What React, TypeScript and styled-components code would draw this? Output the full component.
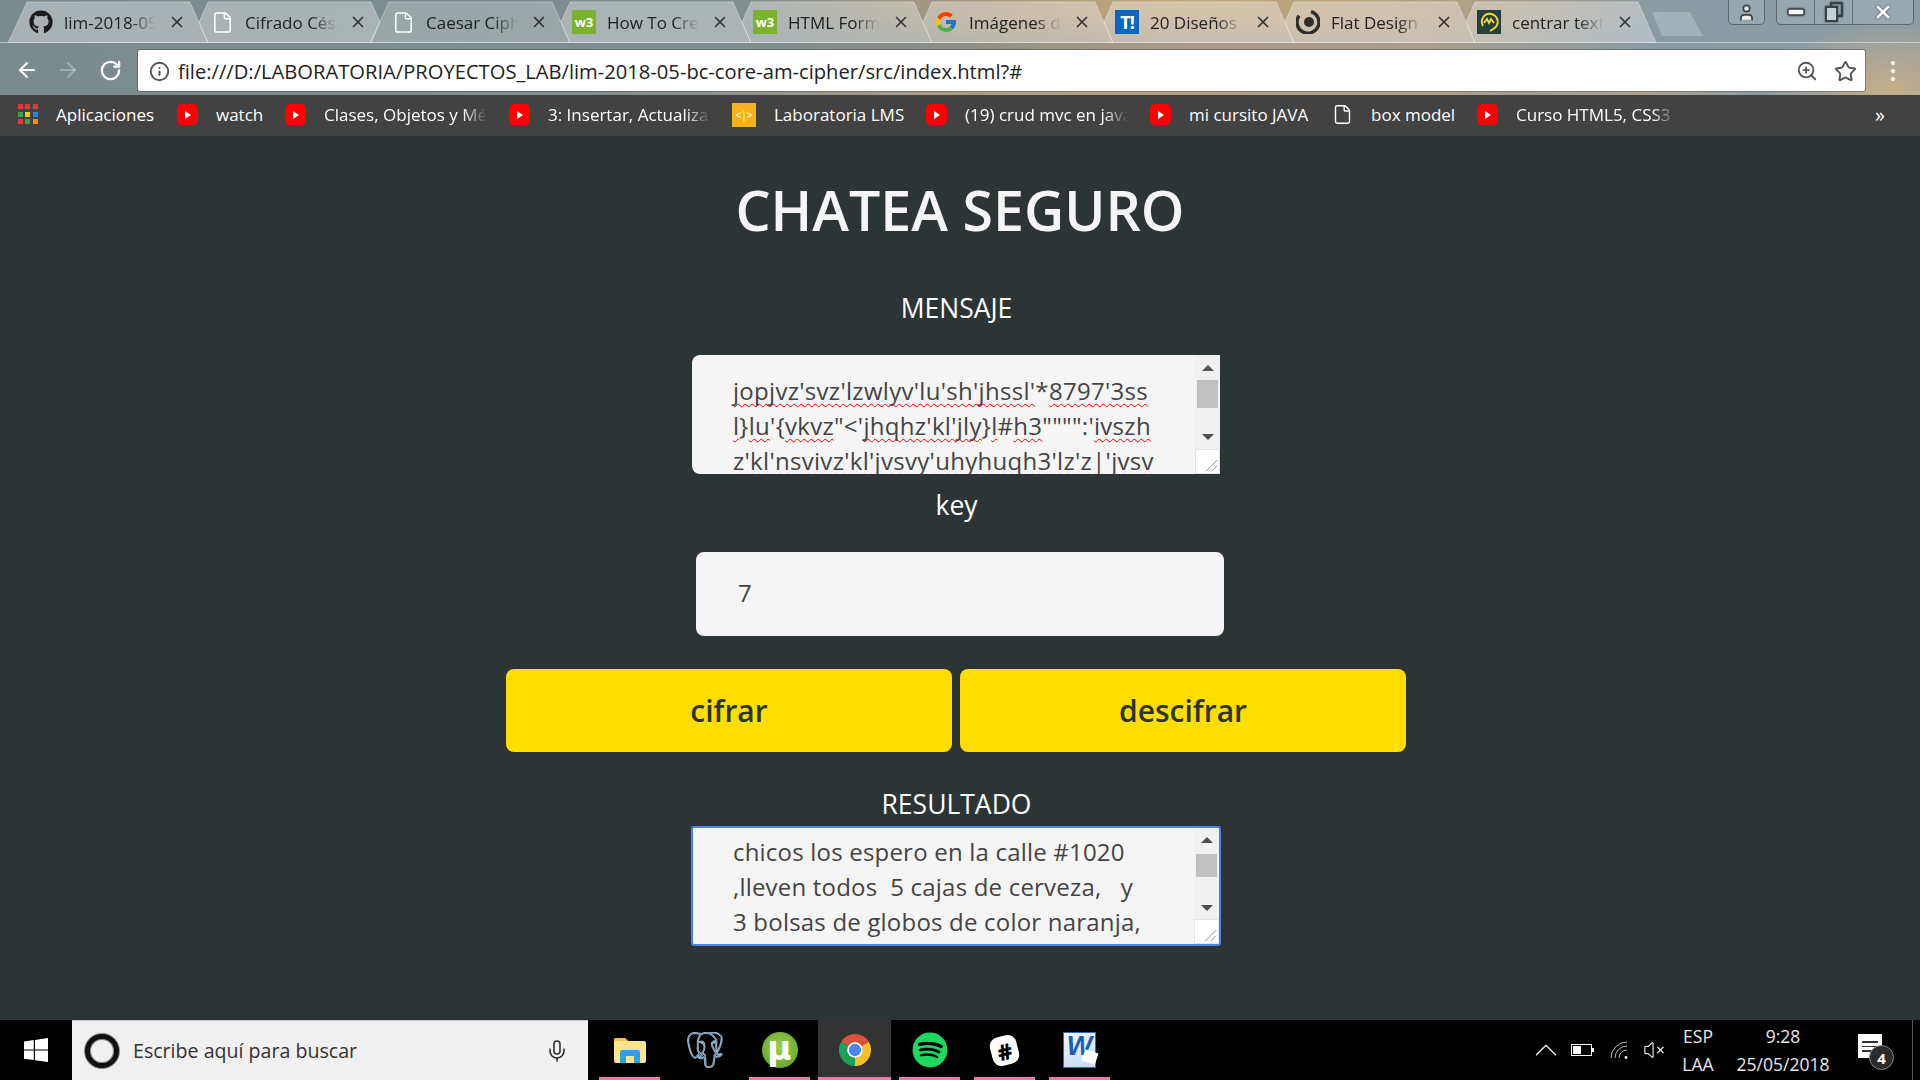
import React from "react";
import styled, { createGlobalStyle } from "styled-components";
import { FaGithub, FaSpotify } from "react-icons/fa";
import { FcGoogle } from "react-icons/fc";
import { SiPostgresql } from "react-icons/si";
import { ArrowLeft, ArrowRight, RotateCw, Info, ZoomIn, Star, File, Mic, ChevronUp, VolumeX, User, X } from "lucide-react";

const Global = createGlobalStyle`
  html, body { margin: 0; padding: 0; background: #2d3436; overflow: hidden; }
  * { box-sizing: border-box; }
  #root { width: 1920px; height: 1080px; }
`;

const Screen = styled.div`
  width: 1920px; height: 1080px; display: flex; flex-direction: column;
  font-family: "Open Sans", "Liberation Sans", sans-serif; overflow: hidden;
`;

/* ---------- browser top ---------- */
const Frame = styled.header`
  height: 95px; flex: none; display: flex; flex-direction: column;
  background:
    radial-gradient(ellipse 130px 70px at 1890px 90px, #c8ae8a 0%, rgba(200,174,138,0) 100%),
    radial-gradient(ellipse 120px 30px at 1640px 85px, #b9a689 0%, rgba(185,166,137,0) 100%),
    radial-gradient(ellipse 480px 50px at 1200px 5px, #c2a67c 0%, rgba(194,166,124,0) 100%),
    radial-gradient(ellipse 560px 45px at 1130px 90px, #b8a388 0%, rgba(184,163,136,0) 100%),
    linear-gradient(90deg, #7b8a8d 0%, #7f8e90 38%, #8e8f85 52%, #a3998a 62%, #a89e8b 74%, #8a9ba3 86%, #8b9ca4 100%);
`;
const TabStrip = styled.div`
  height: 43px; flex: none; display: flex; padding-left: 8px;
  border-bottom: 1px solid rgba(255,255,255,.45);
`;
const TabBox = styled.div`
  position: relative; width: 200px; height: 43px; margin-right: -19px; flex: none;
  display: flex; align-items: center; padding: 1px 0 0 21px; color: #222;
`;
const TabShape = styled.svg`
  position: absolute; left: 0; top: 0; width: 200px; height: 43px; pointer-events: none;
`;
const Fav = styled.span`
  position: relative; width: 24px; height: 24px; flex: none; display: flex; align-items: center; justify-content: center;
`;
const TabTitle = styled.span`
  position: relative; width: 92px; margin-left: 11px; font-size: 17px; white-space: nowrap; overflow: hidden; flex: none;
  -webkit-mask-image: linear-gradient(90deg, #000 72%, transparent 100%);
  mask-image: linear-gradient(90deg, #000 72%, transparent 100%);
`;
const TabClose = styled.span`
  position: relative; margin-left: 11px; width: 20px; height: 20px; display: flex; align-items: center; justify-content: center; color: #333;
`;
const W3Badge = styled.span`
  width: 24px; height: 24px; background: #7bb32e; color: #fff; font-size: 13px; font-weight: 700; display: flex; align-items: center; justify-content: center; border-radius: 1px;
`;
const TBadge = styled.span`
  width: 24px; height: 24px; background: #0b66c3; color: #fff; font-size: 18px; font-weight: 700; display: flex; align-items: center; justify-content: center; letter-spacing: -1px;
`;
const NewTab = styled.svg`
  width: 51px; height: 24px; margin: 12px 0 0 15px; flex: none;
`;
const ProfileBtn = styled.div`
  width: 37px; height: 25px; margin-left: 25px; flex: none; border: 1px solid rgba(60,70,75,.65); border-top: none;
  border-radius: 0 0 5px 5px; background: rgba(255,255,255,.12); display: flex; align-items: center; justify-content: center; color: #3a4246;
`;
const WinGroup = styled.div`
  width: 138px; height: 25px; margin-left: 11px; flex: none; display: flex; border: 1px solid rgba(60,70,75,.65); border-top: none;
  border-radius: 0 0 5px 5px; background: rgba(255,255,255,.12);
`;
const WinBtn = styled.div<{ $w: number }>`
  width: ${(p) => p.$w}px; display: flex; align-items: center; justify-content: center; color: #f4f4f4;
  & + & { border-left: 1px solid rgba(60,70,75,.55); }
  & svg { filter: drop-shadow(0 0 1px #3a4246); }
`;
const Toolbar = styled.div`
  height: 52px; flex: none; display: flex; padding-top: 7px; align-items: flex-start;
`;
const NavBtn = styled.div<{ $ml: number; $dim?: boolean }>`
  width: 24px; height: 24px; margin: 8px 0 0 ${(p) => p.$ml}px; display: flex; align-items: center; justify-content: center;
  color: ${(p) => (p.$dim ? "rgba(255,255,255,.28)" : "#fff")}; flex: none;
`;
const AddressBar = styled.div`
  width: 1727px; height: 41px; margin-left: 16px; flex: none; background: #fff; border-radius: 2px; display: flex; align-items: center;
  box-shadow: 0 0 0 1px rgba(70,70,70,.45); padding: 1px 8px 0 11px; color: #555;
`;
const Url = styled.span`
  margin-left: 8px; font-size: 20.17px; color: #222; white-space: nowrap; flex: 1;
`;
const BarIcon = styled.span<{ $ml?: number }>`
  margin-left: ${(p) => p.$ml ?? 0}px; display: flex; color: #555;
`;
const MenuDots = styled.div`
  margin: 11px 0 0 26px; display: flex; flex-direction: column; gap: 4px;
  & span { width: 4px; height: 4px; border-radius: 50%; background: #fff; }
`;

/* ---------- bookmarks ---------- */
const Bookmarks = styled.nav`
  height: 41px; flex: none; background: #424242; display: flex; align-items: center; padding: 0 0 2px 17px; gap: 22px; color: #fff;
`;
const Mark = styled.div`
  display: flex; align-items: center; gap: 18px; flex: none;
`;
const MarkIcon = styled.span`
  width: 21px; height: 24px; display: flex; align-items: center; justify-content: center; flex: none;
`;
const MarkLabel = styled.span<{ $w: number; $fade?: boolean }>`
  width: ${(p) => p.$w}px; font-size: 17px; white-space: nowrap; overflow: hidden;
  ${(p) => p.$fade ? "-webkit-mask-image: linear-gradient(90deg,#000 85%,transparent 100%); mask-image: linear-gradient(90deg,#000 85%,transparent 100%);" : ""}
`;
const Yt = styled.span`
  width: 21px; height: 21px; background: #f00; border-radius: 5px; display: flex; align-items: center; justify-content: center;
  &::after { content: ""; border-left: 6px solid #fff; border-top: 4px solid transparent; border-bottom: 4px solid transparent; }
`;
const LabBadge = styled.span`
  width: 24px; height: 24px; background: #f6b21b; color: #fff; font-size: 10px; display: flex; align-items: center; justify-content: center; flex: none;
`;
const AppsGrid = styled.span`
  width: 20px; height: 21px; display: grid; grid-template-columns: repeat(3, 5px); grid-auto-rows: 5px; gap: 2.5px;
`;
const AppDot = styled.i<{ $c: string }>` background: ${(p) => p.$c}; display: block; `;
const More = styled.span`
  margin-left: auto; margin-right: 35px; font-size: 20px; color: #fff;
`;

/* ---------- page ---------- */
const Page = styled.main`
  flex: 1; background: #2d3436; display: flex; flex-direction: column; align-items: center; padding-top: 36px; position: relative;
`;
const Title = styled.h1`
  margin: 0; font-size: 55.5px; line-height: 76px; font-weight: 600; color: #f5f5f5; height: 76px; white-space: nowrap;
`;
const Label = styled.label<{ $mt: number }>`
  display: block; width: 100%; text-align: center; padding-right: 7px; font-size: 26.5px; line-height: 30px; height: 30px; color: #fff; margin-top: ${(p) => p.$mt}px;
`;
const TextBox = styled.div<{ $mt: number; $focus?: boolean }>`
  width: ${(p) => (p.$focus ? 530 : 528)}px; height: ${(p) => (p.$focus ? 120 : 119)}px; margin: ${(p) => p.$mt}px 8px 0 0; display: flex; flex: none; overflow: hidden;
  border-radius: ${(p) => (p.$focus ? "3px" : "8px 0 0 8px")};
  border: ${(p) => (p.$focus ? "2px solid #4a86e0" : "none")};
`;
const TextPane = styled.div<{ $pt: number; $pl: number; $ls: number }>`
  flex: 1; background: #f5f5f5; padding: ${(p) => p.$pt}px 0 0 ${(p) => p.$pl}px; font-size: 24px; line-height: 35px; color: #444; letter-spacing: ${(p) => p.$ls}px; overflow: hidden;
`;
const TextLine = styled.div` white-space: pre; `;
const Miss = styled.span`
  text-decoration: underline wavy #f00 1px; text-underline-offset: 3px; text-decoration-skip-ink: none;
`;
const ScrollTrack = styled.div`
  width: 25px; flex: none; background: #f1f1f1; display: flex; flex-direction: column; align-items: center;
`;
const ArrowUp = styled.span<{ $mt: number }>`
  margin-top: ${(p) => p.$mt}px; flex: none; width: 0; height: 0; border-left: 6px solid transparent; border-right: 6px solid transparent; border-bottom: 6px solid #505050;
`;
const ArrowDown = styled.span`
  flex: none; width: 0; height: 0; border-left: 6px solid transparent; border-right: 6px solid transparent; border-top: 6px solid #505050;
`;
const Thumb = styled.span<{ $mt: number; $h: number; $mb: number }>`
  margin: ${(p) => p.$mt}px 0 ${(p) => p.$mb}px; height: ${(p) => p.$h}px; width: 21px; background: #c1c1c1; flex: none;
`;
const Resizer = styled.svg`
  margin-top: auto; width: 25px; height: 25px; flex: none; background: #fff; border: 1px solid #e4e4e4;
`;
const KeyInput = styled.div`
  width: 528px; height: 84px; margin-top: 32px; flex: none; background: #f5f5f5; border-radius: 8px; padding: 0 0 3px 42px; display: flex; align-items: center;
  font-size: 24px; color: #444;
`;
const Buttons = styled.div`
  display: flex; gap: 8px; margin: 33px 8px 0 0; flex: none;
`;
const Action = styled.button`
  width: 446px; height: 83px; border: none; border-radius: 8px; background: #ffde00; color: #2d3436; font-family: inherit; font-size: 30px; font-weight: 600; padding: 0;
`;

/* ---------- taskbar ---------- */
const Taskbar = styled.footer`
  height: 60px; flex: none; background: #000; display: flex; align-items: stretch;
`;
const Start = styled.div`
  width: 72px; flex: none; display: flex; align-items: center; justify-content: center;
`;
const Search = styled.div`
  width: 516px; flex: none; background: #f0f0f0; border-top: 1px solid #c9c9c9; display: flex; align-items: center; padding: 0 19px 0 13px; color: #333;
`;
const Ring = styled.span`
  width: 34px; height: 34px; border-radius: 50%; border: 5px solid #111; box-shadow: 0 0 0 1px #888, inset 0 0 0 1px #888; flex: none; background: #f0f0f0;
`;
const SearchText = styled.span`
  margin-left: 14px; font-size: 19.6px; flex: 1; color: #333;
`;
const TaskItem = styled.div<{ $ml: number; $w: number; $open?: boolean; $active?: boolean }>`
  margin-left: ${(p) => p.$ml}px; width: ${(p) => p.$w}px; flex: none; display: flex; align-items: center; justify-content: center;
  background: ${(p) => (p.$active ? "#333" : "transparent")};
  box-shadow: ${(p) => (p.$open ? "inset 0 -3px 0 #ef78a8" : "none")};
`;
const UTorrent = styled.span`
  width: 36px; height: 36px; border-radius: 50%; background: radial-gradient(circle at 50% 40%, #9bd04a, #5b9a22); color: #fff; font-size: 33px; font-weight: 700;
  display: flex; align-items: center; justify-content: center; line-height: 1; font-family: "DejaVu Sans", sans-serif; padding-bottom: 4px;
`;
const SlackBadge = styled.span`
  width: 27px; height: 29px; border-radius: 9px; background: #fff; color: #000; font-size: 22px; font-weight: 800; display: flex; align-items: center; justify-content: center; transform: rotate(-14deg);
`;
const WordDoc = styled.span`
  position: relative; width: 33px; height: 36px; background: linear-gradient(160deg, #f4f8fd 0%, #c4d9f0 100%); border: 1px solid #2d6cc0; color: #1c5cb4; font-size: 27px; font-weight: 800; font-style: italic;
  font-family: "Liberation Sans", sans-serif; display: flex; align-items: flex-start; justify-content: center; line-height: 26px;
  &::after { content: ""; position: absolute; right: -2px; bottom: 4px; width: 14px; height: 12px; background: #fff; transform: rotate(18deg); }
`;
const Tray = styled.div`
  margin-left: auto; display: flex; align-items: center; color: #e8e8e8; flex: none;
`;
const TrayIcon = styled.span<{ $ml: number }>`
  margin-left: ${(p) => p.$ml}px; display: flex;
`;
const TwoLines = styled.div<{ $ml: number; $w: number }>`
  margin-left: ${(p) => p.$ml}px; width: ${(p) => p.$w}px; text-align: center; font-size: 17.5px; line-height: 28px; color: #e8e8e8; white-space: nowrap;
`;
const Notify = styled.div`
  position: relative; margin-left: 24px; width: 24px; height: 24px; background: #fff; display: flex; flex-direction: column; gap: 3px; padding: 7px 4px 0;
  margin-bottom: 8px;
  & i { display: block; height: 1.5px; background: #333; }
`;
const NotifyBadge = styled.span`
  position: absolute; left: 11px; top: 11px; width: 25px; height: 25px; border-radius: 50%; background: #2b2b2b; border: 1px solid #888; color: #fff; font-size: 15px; font-weight: 700;
  display: flex; align-items: center; justify-content: center;
`;
const DesktopEdge = styled.span`
  width: 1px; margin: 0 7px 0 30px; background: #555; align-self: stretch; flex: none;
`;

const Shape = ({ notch, cut, active }: { notch?: boolean; cut?: boolean; active?: boolean }) => {
  const left = notch ? "19,43 10,22 19,2" : "0,43 19,2";
  const right = cut ? "182,2 191,22 182,43" : "182,2 200,43";
  return (
    <TabShape viewBox="0 0 200 43">
      <polygon points={`${left} ${right}`} fill={active ? "rgba(255,255,255,.22)" : "rgba(255,255,255,.34)"} stroke="rgba(255,255,255,.35)" strokeWidth="1" />
    </TabShape>
  );
};

const FlatIcon = () => (
  <svg width="24" height="24" viewBox="0 0 24 24">
    <path d="M15 1.6A11 11 0 1 1 3 5.8" fill="none" stroke="#2e2e2e" strokeWidth="3.4" />
    <circle cx="13" cy="12" r="5" fill="#2e2e2e" />
  </svg>
);
const CenterIcon = () => (
  <svg width="24" height="24" viewBox="0 0 24 24">
    <rect width="24" height="24" fill="#27403a" />
    <path d="M6 16A8 8 0 1 1 17 18.5L13 21" fill="none" stroke="#f4d93a" strokeWidth="2" />
    <path d="M7 13l3-4 2 4 2-4 3 4" fill="none" stroke="#f4d93a" strokeWidth="1.8" />
  </svg>
);

const tabs: { t: string; icon: React.ReactNode; notch?: boolean; cut?: boolean; active?: boolean }[] = [
  { t: "lim-2018-05-bc-core", icon: <FaGithub size={24} color="#1b1b1b" />, cut: false },
  { t: "Cifrado César", icon: <File size={23} color="#fff" strokeWidth={1.6} />, notch: true, cut: true },
  { t: "Caesar Cipher", icon: <File size={23} color="#fff" strokeWidth={1.6} />, active: true },
  { t: "How To Create", icon: <W3Badge>w3</W3Badge>, notch: true },
  { t: "HTML Forms", icon: <W3Badge>w3</W3Badge>, notch: true },
  { t: "Imágenes de", icon: <FcGoogle size={24} />, notch: true },
  { t: "20 Diseños de", icon: <TBadge>T!</TBadge>, notch: true },
  { t: "Flat Design", icon: <FlatIcon />, notch: true },
  { t: "centrar texto", icon: <CenterIcon />, notch: true },
];

const appColors = ["#e53935", "#e53935", "#e53935", "#43a047", "#fbc02d", "#1e88e5", "#e53935", "#43a047", "#fb8c00"];

const TextArea = ({ focus, mt, pt, pl, ls, up, thumbTop, thumbH, thumbBottom, children }: {
  focus?: boolean; mt: number; pt: number; pl: number; ls: number; up: number; thumbTop: number; thumbH: number; thumbBottom: number; children: React.ReactNode;
}) => (
  <TextBox $mt={mt} $focus={focus}>
    <TextPane $pt={pt} $pl={pl} $ls={ls}>{children}</TextPane>
    <ScrollTrack>
      <ArrowUp $mt={up} />
      <Thumb $mt={thumbTop} $h={thumbH} $mb={thumbBottom} />
      <ArrowDown />
      <Resizer viewBox="0 0 25 25">
        <path d="M11 23L23 11M17 23L23 17" stroke="#888" strokeWidth="1" />
      </Resizer>
    </ScrollTrack>
  </TextBox>
);

export default function App() {
  return (
    <Screen>
      <Global />
      <Frame>
        <TabStrip>
          {tabs.map((tab) => (
            <TabBox key={tab.t}>
              <Shape notch={tab.notch} cut={tab.cut} active={tab.active} />
              <Fav>{tab.icon}</Fav>
              <TabTitle>{tab.t}</TabTitle>
              <TabClose><X size={18} strokeWidth={2.2} /></TabClose>
            </TabBox>
          ))}
          <NewTab viewBox="0 0 51 24">
            <polygon points="0,0 38,0 51,24 10,24" fill="rgba(255,255,255,.22)" />
          </NewTab>
          <ProfileBtn><User size={19} strokeWidth={2.2} fill="#eee" /></ProfileBtn>
          <WinGroup>
            <WinBtn $w={37}>
              <svg width="18" height="10" viewBox="0 0 18 10"><rect x="1" y="2" width="16" height="6" rx="2" fill="#f4f4f4" stroke="#3a4246" strokeWidth="1.4" /></svg>
            </WinBtn>
            <WinBtn $w={38}>
              <svg width="18" height="20" viewBox="0 0 18 20" fill="none" stroke="#3a4246" strokeWidth="2"><rect x="6" y="1" width="11" height="13" /><rect x="1" y="5" width="11" height="14" fill="#c6cfd2" /></svg>
            </WinBtn>
            <WinBtn $w={61}><X size={20} strokeWidth={3.4} /></WinBtn>
          </WinGroup>
        </TabStrip>
        <Toolbar>
          <NavBtn $ml={15}><ArrowLeft size={24} strokeWidth={2.2} /></NavBtn>
          <NavBtn $ml={17} $dim><ArrowRight size={24} strokeWidth={2.2} /></NavBtn>
          <NavBtn $ml={18}><RotateCw size={23} strokeWidth={2.4} /></NavBtn>
          <AddressBar>
            <Info size={21} strokeWidth={2.2} />
            <Url>file:///D:/LABORATORIA/PROYECTOS_LAB/lim-2018-05-bc-core-am-cipher/src/index.html?#</Url>
            <BarIcon><ZoomIn size={22} /></BarIcon>
            <BarIcon $ml={16}><Star size={23} strokeWidth={2} /></BarIcon>
          </AddressBar>
          <MenuDots><span /><span /><span /></MenuDots>
        </Toolbar>
      </Frame>
      <Bookmarks>
        <Mark><MarkIcon><AppsGrid>{appColors.map((c, i) => <AppDot key={i} $c={c} />)}</AppsGrid></MarkIcon><MarkLabel $w={99}>Aplicaciones</MarkLabel></Mark>
        <Mark><MarkIcon><Yt /></MarkIcon><MarkLabel $w={47}>watch</MarkLabel></Mark>
        <Mark><MarkIcon><Yt /></MarkIcon><MarkLabel $w={163} $fade>Clases, Objetos y Métodos</MarkLabel></Mark>
        <Mark><MarkIcon><Yt /></MarkIcon><MarkLabel $w={162} $fade>3: Insertar, Actualizar y</MarkLabel></Mark>
        <Mark><LabBadge>&lt;|&gt;</LabBadge><MarkLabel $w={130}>Laboratoria LMS</MarkLabel></Mark>
        <Mark><MarkIcon><Yt /></MarkIcon><MarkLabel $w={163} $fade>(19) crud mvc en java</MarkLabel></Mark>
        <Mark><MarkIcon><Yt /></MarkIcon><MarkLabel $w={121}>mi cursito JAVA</MarkLabel></Mark>
        <Mark><MarkIcon><File size={23} strokeWidth={1.6} /></MarkIcon><MarkLabel $w={84}>box model</MarkLabel></Mark>
        <Mark><MarkIcon><Yt /></MarkIcon><MarkLabel $w={160} $fade>Curso  HTML5, CSS3</MarkLabel></Mark>
        <More>»</More>
      </Bookmarks>
      <Page>
        <Title>CHATEA SEGURO</Title>
        <Label $mt={45}>MENSAJE</Label>
        <TextArea mt={32} pt={18} pl={41} ls={0.3} up={10} thumbTop={9} thumbH={28} thumbBottom={26}>
          <TextLine><Miss>jopjvz'svz'lzwlyv'lu'sh'jhssl'</Miss>*<Miss>8797'3ss</Miss></TextLine>
          <TextLine><Miss>l</Miss>{"}"}<Miss>lu</Miss>'{"{"}<Miss>vkvz</Miss>"&lt;'<Miss>jhqhz'kl'jly</Miss>{"}"}<Miss>l</Miss>#<Miss>h3</Miss>"""":'<Miss>ivszh</Miss></TextLine>
          <TextLine><Miss>z'kl'nsvivz'kl'jvsvy'uhyhuqh3'lz'z|'jvsv</Miss></TextLine>
        </TextArea>
        <Label $mt={16}>key</Label>
        <KeyInput>7</KeyInput>
        <Buttons>
          <Action>cifrar</Action>
          <Action>descifrar</Action>
        </Buttons>
        <Label $mt={37}>RESULTADO</Label>
        <TextArea focus mt={7} pt={6} pl={40} ls={0.2} up={9} thumbTop={11} thumbH={23} thumbBottom={28}>
          <TextLine>chicos los espero en la calle #1020</TextLine>
          <TextLine>,lleven todos  5 cajas de cerveza,   y</TextLine>
          <TextLine>3 bolsas de globos de color naranja,</TextLine>
        </TextArea>
      </Page>
      <Taskbar>
        <Start>
          <svg width="24" height="24" viewBox="0 0 24 24" fill="#fff"><path d="M0 3.4l9.8-1.3v9.4H0zM11 1.9L24 0v11.5H11zM0 12.6h9.8V22L0 20.7zM11 12.6h13V24l-13-1.8z" /></svg>
        </Start>
        <Search>
          <Ring />
          <SearchText>Escribe aquí para buscar</SearchText>
          <Mic size={24} strokeWidth={1.6} />
        </Search>
        <TaskItem $ml={11} $w={61} $open>
          <svg width="32" height="26" viewBox="0 0 32 26">
            <path d="M0 3a2 2 0 0 1 2-2h9l3 3h16a2 2 0 0 1 2 2v18a2 2 0 0 1-2 2H2a2 2 0 0 1-2-2z" fill="#ffe48c" />
            <path d="M0 3a2 2 0 0 1 2-2h9l3 3H0z" fill="#f6c344" />
            <path d="M6 26V15a2 2 0 0 1 2-2h16a2 2 0 0 1 2 2v11h-6v-7h-8v7z" fill="#2aa4e0" />
          </svg>
        </TaskItem>
        <TaskItem $ml={14} $w={61}><SiPostgresql size={36} color="#336791" stroke="#cfe0ee" strokeWidth={0.5} /></TaskItem>
        <TaskItem $ml={14} $w={61} $open><UTorrent>µ</UTorrent></TaskItem>
        <TaskItem $ml={8} $w={73} $open $active>
          <svg width="34" height="36" viewBox="0 0 36 36">
            <path d="M18 18L3.3 9.5A17 17 0 0 1 32.7 9.5Z" fill="#d9513f" />
            <path d="M18 18L32.7 9.5A17 17 0 0 1 18 35Z" fill="#f3c02d" />
            <path d="M18 18L18 35A17 17 0 0 1 3.3 9.5Z" fill="#1fa05a" />
            <circle cx="18" cy="18" r="8.2" fill="#fff" />
            <circle cx="18" cy="18" r="6.5" fill="#4a86ea" />
          </svg>
        </TaskItem>
        <TaskItem $ml={8} $w={61} $open><FaSpotify size={36} color="#1ed760" /></TaskItem>
        <TaskItem $ml={14} $w={61} $open><SlackBadge>#</SlackBadge></TaskItem>
        <TaskItem $ml={14} $w={61} $open><WordDoc>W</WordDoc></TaskItem>
        <Tray>
          <TrayIcon $ml={0}><ChevronUp size={38} strokeWidth={0.9} /></TrayIcon>
          <TrayIcon $ml={6}>
            <svg width="23" height="12" viewBox="0 0 23 12"><rect x=".5" y=".5" width="20" height="11" fill="none" stroke="#fff" /><rect x="2" y="2" width="8" height="8" fill="#fff" /><rect x="21" y="4" width="2" height="4" fill="#fff" /></svg>
          </TrayIcon>
          <TrayIcon $ml={16}>
            <svg width="18" height="18" viewBox="0 0 18 18" fill="none" stroke="#bbb" strokeWidth="1"><path d="M1 17A16 16 0 0 1 17 1" /><path d="M5 17A12 12 0 0 1 17 5" /><path d="M9 17A8 8 0 0 1 17 9" /><circle cx="16" cy="16.5" r="1.4" fill="#fff" stroke="none" /></svg>
          </TrayIcon>
          <TrayIcon $ml={15}><VolumeX size={22} strokeWidth={1.3} /></TrayIcon>
          <TwoLines $ml={17} $w={32}>ESP<br />LAA</TwoLines>
          <TwoLines $ml={18} $w={102}>9:28<br />25/05/2018</TwoLines>
          <Notify><i /><i /><i /><NotifyBadge>4</NotifyBadge></Notify>
          <DesktopEdge />
        </Tray>
      </Taskbar>
    </Screen>
  );
}
